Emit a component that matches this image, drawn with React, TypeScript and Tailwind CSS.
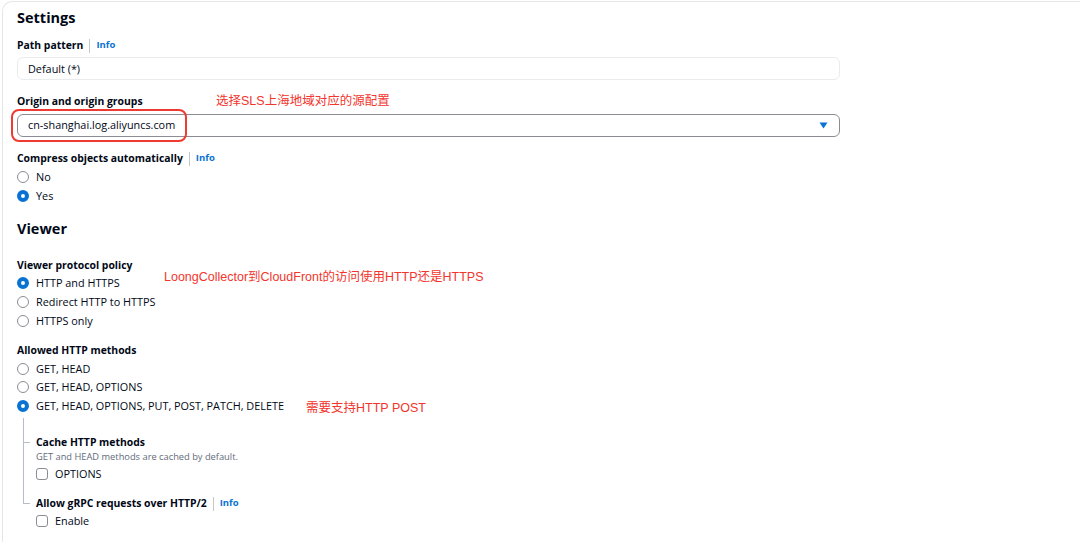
import React from "react";

const FONT = { fontFamily: '"Open Sans", "Noto Sans CJK SC", sans-serif' };
const CJK = { fontFamily: '"Liberation Sans", "Noto Sans CJK SC", sans-serif' };

function Info() {
  return (
    <span className="flex items-center">
      <span className="mx-[6px] h-[14px] w-px bg-[#c6c6cd]" />
      <span className="text-[9.5px] font-bold text-[#0972d3]">Info</span>
    </span>
  );
}

function Label({ children, info }: { children: React.ReactNode; info?: boolean }) {
  return (
    <div className="flex h-[16px] items-center pt-px text-[10.4px] font-bold text-[#000716]">
      <span>{children}</span>
      {info && <Info />}
    </div>
  );
}

function Radio({ checked, label, className = "" }: { checked?: boolean; label: string; className?: string }) {
  return (
    <div className={`flex h-[16px] items-center gap-[7px] text-[10.85px] text-[#000716] ${className}`}>
      {checked ? (
        <span className="box-border h-[12px] w-[12px] shrink-0 rounded-full border-[4px] border-[#0972d3] bg-white" />
      ) : (
        <span className="box-border h-[12px] w-[12px] shrink-0 rounded-full border-[1.5px] border-[#8c8c94] bg-white" />
      )}
      <span>{label}</span>
    </div>
  );
}

function Checkbox({ label, className = "" }: { label: string; className?: string }) {
  return (
    <div className={`flex h-[16px] items-center gap-[7px] text-[10.85px] text-[#000716] ${className}`}>
      <span className="box-border h-[12px] w-[12px] shrink-0 rounded-[3px] border-[1.5px] border-[#8c8c94] bg-white" />
      <span>{label}</span>
    </div>
  );
}

export default function App() {
  return (
    <div className="h-[542px] w-[1080px] overflow-hidden bg-white pl-[2px] pt-px" style={FONT}>
      <div className="h-[560px] rounded-tl-[10px] border-l border-t border-[#e4e6e8] pl-[14px]">
        <div className="mt-[6px] flex h-[20px] items-center text-[14.5px] font-bold text-[#000716]">Settings</div>

        <div className="mt-[9px]">
          <Label info>Path pattern</Label>
        </div>
        <div className="mt-[4px] flex h-[23px] w-[823px] items-center rounded-[6px] border border-[#e9ebed] bg-white pl-[10px] text-[10.85px] text-[#000716]">
          <span className="translate-y-[1px]">Default (*)</span>
        </div>

        <div className="relative mt-[13px]">
          <Label>Origin and origin groups</Label>
          <span className="absolute left-[199px] top-0 flex h-[16px] items-center text-[12.5px] text-[#f2352d]" style={CJK}>
            选择SLS上海地域对应的源配置
          </span>
        </div>
        <div className="relative mt-[5px]">
          <div className="flex h-[23px] w-[823px] items-center justify-between rounded-[6px] border border-[#8c8c94] bg-white pl-[10px] pr-[11px] text-[10.85px] text-[#000716]">
            <span>cn-shanghai.log.aliyuncs.com</span>
            <svg width="9" height="7" viewBox="0 0 9 7">
              <path d="M0.5 0.5 H8.5 L4.5 6.5 Z" fill="#0972d3" />
            </svg>
          </div>
          <span className="absolute left-[-6px] top-[-5px] h-[33px] w-[176px] rounded-[8px] border-2 border-[#ee3a32]" />
        </div>

        <div className="mt-[13px]">
          <Label info>Compress objects automatically</Label>
        </div>
        <Radio label="No" className="mt-[3px]" />
        <Radio label="Yes" checked className="mt-[3px]" />

        <div className="mt-[15px] flex h-[20px] items-center text-[14.5px] font-bold text-[#000716]">Viewer</div>

        <div className="relative mt-[18px]">
          <Label>Viewer protocol policy</Label>
          <span className="absolute left-[147px] top-[12px] flex h-[16px] items-center text-[12.5px] text-[#f2352d]" style={CJK}>
            LoongCollector到CloudFront的访问使用HTTP还是HTTPS
          </span>
        </div>
        <Radio label="HTTP and HTTPS" checked className="mt-[2px]" />
        <Radio label="Redirect HTTP to HTTPS" className="mt-[3px]" />
        <Radio label="HTTPS only" className="mt-[3px]" />

        <div className="mt-[13px]">
          <Label>Allowed HTTP methods</Label>
        </div>
        <Radio label="GET, HEAD" className="mt-[3px]" />
        <Radio label="GET, HEAD, OPTIONS" className="mt-[2px]" />
        <div className="relative mt-[3px]">
          <Radio label="GET, HEAD, OPTIONS, PUT, POST, PATCH, DELETE" checked />
          <span className="absolute left-[289px] top-[2px] flex h-[16px] items-center text-[12.5px] text-[#f2352d]" style={CJK}>
            需要支持HTTP POST
          </span>
        </div>

        <div className="relative pl-[19px]">
          <span className="absolute left-[6px] top-[4px] h-[85px] w-px bg-[#b6bec9]" />
          <span className="absolute left-[6px] top-[28px] h-px w-[7px] bg-[#b6bec9]" />
          <span className="absolute left-[6px] top-[89px] h-px w-[7px] bg-[#b6bec9]" />

          <div className="pt-[20px]">
            <Label>Cache HTTP methods</Label>
          </div>
          <div className="mt-px flex h-[12px] items-center text-[9.3px] text-[#5f6b7a]">
            GET and HEAD methods are cached by default.
          </div>
          <Checkbox label="OPTIONS" className="mt-[3px]" />

          <div className="mt-[13px]">
            <Label info>Allow gRPC requests over HTTP/2</Label>
          </div>
          <Checkbox label="Enable" className="mt-[2px]" />
        </div>
      </div>
    </div>
  );
}
